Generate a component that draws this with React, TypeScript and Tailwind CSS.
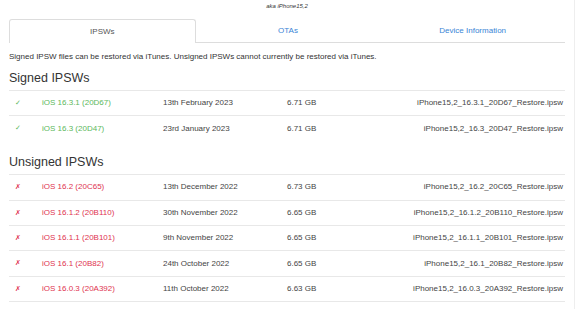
type Firmware = {
  version: string;
  date: string;
  size: string;
  file: string;
};

const signed: Firmware[] = [
  { version: "iOS 16.3.1 (20D67)", date: "13th February 2023", size: "6.71 GB", file: "iPhone15,2_16.3.1_20D67_Restore.ipsw" },
  { version: "iOS 16.3 (20D47)", date: "23rd January 2023", size: "6.71 GB", file: "iPhone15,2_16.3_20D47_Restore.ipsw" },
];

const unsigned: Firmware[] = [
  { version: "iOS 16.2 (20C65)", date: "13th December 2022", size: "6.73 GB", file: "iPhone15,2_16.2_20C65_Restore.ipsw" },
  { version: "iOS 16.1.2 (20B110)", date: "30th November 2022", size: "6.65 GB", file: "iPhone15,2_16.1.2_20B110_Restore.ipsw" },
  { version: "iOS 16.1.1 (20B101)", date: "9th November 2022", size: "6.65 GB", file: "iPhone15,2_16.1.1_20B101_Restore.ipsw" },
  { version: "iOS 16.1 (20B82)", date: "24th October 2022", size: "6.65 GB", file: "iPhone15,2_16.1_20B82_Restore.ipsw" },
  { version: "iOS 16.0.3 (20A392)", date: "11th October 2022", size: "6.63 GB", file: "iPhone15,2_16.0.3_20A392_Restore.ipsw" },
  { version: "iOS 16.0.2 (20A380)", date: "12th September 2022", size: "6.63 GB", file: "iPhone15,2_16.0.2_20A380_Restore.ipsw" },
];

function FirmwareTable({ rows, ok }: { rows: Firmware[]; ok: boolean }) {
  return (
    <div className="text-[8px] text-[#444]">
      {rows.map((r) => (
        <div key={r.file} className="flex h-[25.4px] items-center border-t border-[#e8e8e8]">
          <span
            className={
              ok
                ? "w-[33px] pl-[6px] text-[7px] text-[#5cb85c]"
                : "w-[33px] pl-[6px] text-[7px] text-[#e0334f]"
            }
            style={{ fontFamily: '"DejaVu Sans", sans-serif' }}
          >
            {ok ? "✓" : "✗"}
          </span>
          <span className={ok ? "w-[121px] text-[#5cb85c]" : "w-[121px] text-[#e0334f]"}>{r.version}</span>
          <span className="w-[124px]">{r.date}</span>
          <span className="w-[60px]">{r.size}</span>
          <span className="flex-1 pr-[2px] text-right">{r.file}</span>
        </div>
      ))}
    </div>
  );
}

export default function App() {
  return (
    <div
      className="h-[309px] w-[575px] overflow-hidden border-r border-[#eeeeee] bg-white"
      style={{ fontFamily: '"Liberation Sans", Arial, sans-serif' }}
    >
      <div className="flex h-[13px] items-center justify-center text-[6px] italic text-[#333]">aka iPhone15,2</div>

      <div className="px-[9px]">
        <div className="mt-[6px] flex h-[24px] text-[8px]">
          <div className="flex flex-1 items-center justify-center rounded-t-[3px] border border-b-0 border-[#dddddd] text-[#555]">
            IPSWs
          </div>
          <div className="flex flex-1 items-center justify-center border-b border-[#dddddd] text-[#3a85d6]">OTAs</div>
          <div className="flex flex-1 items-center justify-center border-b border-[#dddddd] text-[#3a85d6]">
            Device Information
          </div>
        </div>

        <p className="mt-[9px] text-[8px] leading-[10px] text-[#333]">
          Signed IPSW files can be restored via iTunes. Unsigned IPSWs cannot currently be restored via iTunes.
        </p>

        <h2 className="mt-[9px] text-[12.5px] leading-[15px] text-[#333]">Signed IPSWs</h2>
        <div className="mt-[4px]">
          <FirmwareTable rows={signed} ok />
        </div>

        <h2 className="mt-[14px] text-[12.5px] leading-[15px] text-[#333]">Unsigned IPSWs</h2>
        <div className="mt-[4.5px]">
          <FirmwareTable rows={unsigned} ok={false} />
        </div>
      </div>
    </div>
  );
}
